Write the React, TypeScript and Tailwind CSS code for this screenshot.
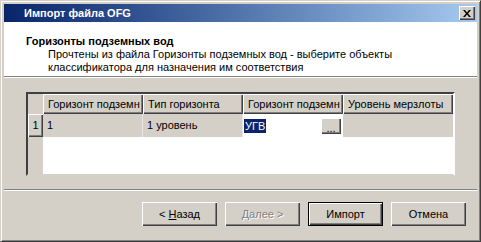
import React from 'react';

const raised =
  'bg-[#d4d0c8] shadow-[inset_1px_1px_#ffffff,inset_-1px_-1px_#404040,inset_-2px_-2px_#808080]';

const HeaderCell = ({ label, w }: { label: string; w: string }) => (
  <div className={`${w} h-[20px] ${raised} pl-[5px] leading-[20px] overflow-hidden whitespace-nowrap`}>
    {label}
  </div>
);

const Button = ({
  children,
  primary,
  disabled,
}: {
  children: React.ReactNode;
  primary?: boolean;
  disabled?: boolean;
}) => (
  <button
    type="button"
    className={`w-[75px] h-[24px] bg-[#d4d0c8] flex items-center justify-center ${
      primary
        ? 'border border-black shadow-[inset_1px_1px_#ffffff,inset_-1px_-1px_#404040,inset_-2px_-2px_#808080]'
        : 'shadow-[inset_1px_1px_#ffffff,inset_-1px_-1px_#404040,inset_-2px_-2px_#808080]'
    } ${disabled ? 'text-[#808080] [text-shadow:1px_1px_#ffffff]' : 'text-black'}`}
  >
    {children}
  </button>
);

export default function App() {
  return (
    <div className="w-[481px] h-[242px] bg-[#d4d0c8] font-['Liberation_Sans',Arial,sans-serif] text-[11px] text-black">
      <div className="w-full h-full p-[2px] border border-t-[#d4d0c8] border-l-[#d4d0c8] border-r-[#404040] border-b-[#404040] shadow-[inset_1px_1px_#ffffff,inset_-1px_-1px_#808080]">
        <div className="w-full h-full p-[1px] flex flex-col">
          {/* title bar */}
          <div className="h-[18px] flex items-center justify-between bg-gradient-to-r from-[#0a246a] to-[#a6caf0] pl-[20px] pr-[2px]">
            <span className="text-white font-bold leading-[18px]">Импорт файла OFG</span>
            <div className={`w-[16px] h-[14px] ${raised} flex items-center justify-center`}>
              <svg width="8" height="7" viewBox="0 0 8 7">
                <path d="M0 0h2l2 2.5L6 0h2L5 3.5 8 7H6L4 4.5 2 7H0l3-3.5z" fill="#000" />
              </svg>
            </div>
          </div>

          {/* header */}
          <div className="h-[54px] bg-white pt-[13px] leading-[13px]">
            <div className="pl-[22px] font-bold">Горизонты подземных вод</div>
            <div className="pl-[44px]">
              Прочтены из файла Горизонты подземных вод - выберите объекты
              <br />
              классификатора для назначения им соответствия
            </div>
          </div>
          <div className="h-[1px] bg-[#808080]" />
          <div className="h-[1px] bg-white" />

          {/* grid */}
          <div className="mt-[14px] mx-[22px] h-[84px] border-2 border-t-[#404040] border-l-[#404040] border-r-white border-b-[#d4d0c8] bg-white flex">
            <div className="w-[15px] bg-[#d4d0c8] flex flex-col">
              <div className="h-[20px]" />
              <div className={`h-[23px] ${raised} flex items-center justify-center`}>1</div>
            </div>
            <div className="flex-1 flex flex-col">
              <div className="flex">
                <HeaderCell label="Горизонт подземн" w="w-[100px]" />
                <HeaderCell label="Тип горизонта" w="w-[100px]" />
                <HeaderCell label="Горизонт подземн" w="w-[100px]" />
                <HeaderCell label="Уровень мерзлоты" w="w-[110px]" />
              </div>
              <div className="flex h-[23px]">
                <div className="w-[100px] bg-[#d4d0c8] border-r border-[#e8e6e2] pl-[4px] leading-[23px]">1</div>
                <div className="w-[100px] bg-[#d4d0c8] border-r border-[#e8e6e2] pl-[4px] leading-[23px]">1 уровень</div>
                <div className="w-[100px] bg-white flex items-center pl-[1px] pr-[2px]">
                  <span className="bg-[#0a246a] text-white leading-[14px] px-[1px]">УГВ</span>
                  <div className="flex-1" />
                  <div className={`w-[20px] h-[16px] ${raised} flex items-end justify-center leading-[12px]`}>...</div>
                </div>
                <div className="w-[110px] bg-[#d4d0c8]" />
              </div>
            </div>
          </div>

          {/* separator */}
          <div className="mt-[13px] h-[1px] bg-[#808080]" />
          <div className="h-[1px] bg-white" />

          {/* buttons */}
          <div className="mt-[11px] flex justify-end gap-[8px] pr-[11px]">
            <Button>
              &lt;&nbsp;<span className="underline">Н</span>азад
            </Button>
            <Button disabled>
              <span className="underline">Д</span>алее&nbsp;&gt;
            </Button>
            <Button primary>Импорт</Button>
            <Button>Отмена</Button>
          </div>
        </div>
      </div>
    </div>
  );
}
